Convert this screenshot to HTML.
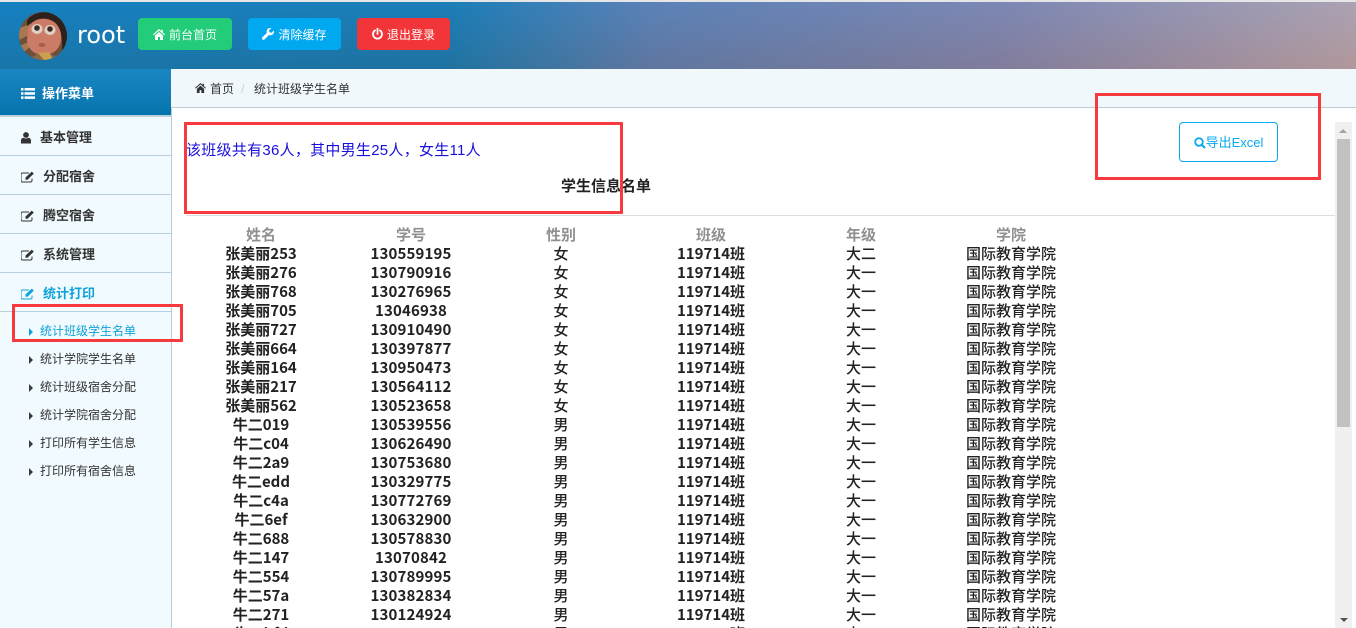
<!DOCTYPE html>
<html lang="zh-CN">
<head>
<meta charset="utf-8">
<title>统计班级学生名单</title>
<style>
html,body{margin:0;padding:0;width:1356px;height:628px;overflow:hidden;background:#fff;}
body{position:relative;font-family:"Liberation Sans","Noto Sans CJK SC",sans-serif;font-size:12px;color:#333;}
.abs,.btn,.item,.sub,.sep,.box,.hd{position:absolute;}
#top{position:absolute;left:0;top:0;width:1356px;height:2px;background:#e6e6e6;}
#header{position:absolute;left:0;top:2px;width:1356px;height:67px;background:linear-gradient(180deg,rgba(40,140,230,.12),rgba(70,30,0,.1)),linear-gradient(90deg,#137fbc 0%,#1a7cb2 33%,#6280b1 48%,#8887ad 74%,#bda5ac 100%);}
.btn{top:18px;height:32px;border-radius:4px;color:#fff;font-size:12px;line-height:34px;text-align:center;white-space:nowrap;}
.btn svg{vertical-align:-1px;margin-right:4px;}
#side{position:absolute;left:0;top:69px;width:171px;height:559px;background:#f1fafe;}
#vline{position:absolute;left:171px;top:108px;width:1px;height:520px;background:#bccdd8;}
#sidehead{position:absolute;left:0;top:69px;width:171px;height:46px;background:linear-gradient(180deg,#1a86c3,#0674ad);border-bottom:2px solid #bcd0dc;color:#fff;font-weight:bold;font-size:13px;line-height:50px;}
.sep{left:0;width:171px;height:1px;background:#b7cfdd;}
.item{left:21px;font-size:13px;font-weight:bold;color:#333;line-height:20px;white-space:nowrap;}
.item svg{vertical-align:-2px;margin-right:7px;}
.sub{left:29px;font-size:12px;color:#333;line-height:16px;white-space:nowrap;}
.sub i{display:inline-block;width:0;height:0;border-left:4px solid #3a3a3a;border-top:4px solid transparent;border-bottom:4px solid transparent;margin-right:7px;vertical-align:-0.5px;}
#crumb{position:absolute;left:171px;top:69px;width:1185px;height:38px;background:#f1f8fc;border-bottom:1px solid #bccdd8;}
.box{border:3px solid #f63a3e;box-sizing:border-box;}
#tbl{position:absolute;left:186px;top:225px;border-collapse:collapse;table-layout:fixed;width:900px;font-family:"Noto Sans CJK SC","Liberation Sans",sans-serif;font-size:15px;font-weight:bold;color:#222;}
#tbl td,#tbl th{width:150px;height:19px;padding:0;text-align:center;line-height:19px;white-space:nowrap;}
#tbl th{color:#909090;font-size:15px;}
#tbl tr{height:19px;}
#tbl td.r{font-weight:500;}
#tbl td.n{letter-spacing:.15px;}
</style>
</head>
<body>
<div id="top"></div>
<div id="header"></div>

<svg class="abs" style="left:19px;top:12px" width="48" height="48" viewBox="0 0 48 48">
  <defs><clipPath id="c"><circle cx="24" cy="24" r="24"/></clipPath></defs>
  <g clip-path="url(#c)">
    <rect width="48" height="48" fill="#6e4f38"/>
    <path d="M0 16L12 12V22L0 28ZM0 34L10 30V36L2 42Z" fill="#a87850"/>
    <path d="M8 9C14-3 40-3 48 10V36L43 38C44 26 42 14 34 9 26 5 16 7 8 14Z" fill="#2e211b"/>
    <path d="M9 18C12 8 20 6 28 7 38 9 43 18 42 28 41 38 33 43 24 43 15 43 8 36 8 28Z" fill="#cc7c66"/>
    <path d="M8 48L20 41 30 41 42 48Z" fill="#8c6a45"/>
    <path d="M19 41L25 48H34L30 40Z" fill="#caa24e"/>
    <ellipse cx="18" cy="17" rx="5.500" ry="5" fill="#ded2c8"/>
    <ellipse cx="31" cy="18" rx="5.500" ry="5" fill="#ded2c8"/>
    <circle cx="18" cy="16" r="2.800" fill="#3c2a22"/>
    <circle cx="31" cy="17" r="2.800" fill="#3c2a22"/>
    <ellipse cx="23" cy="33" rx="3.500" ry="2" fill="#a85a4c"/>
  </g>
</svg>
<div class="abs" style="left:77px;top:20px;font-family:'DejaVu Sans',sans-serif;font-size:24px;line-height:30px;color:#fff;">root</div>

<div class="btn" style="left:138px;width:94px;background:#22cc78;"><svg width="12" height="11" viewBox="0 0 12 11"><path d="M6 0L0 5.400l.7.800L6 1.600l5.300 4.600.7-.8L9.800 3.500V.8H8.300V2.200zM2 6.500V11h3V8h2v3h3V6.500L6 3z" fill="#fff"/></svg>前台首页</div>
<div class="btn" style="left:248px;width:93px;background:#00a8f0;"><svg width="12" height="12" viewBox="0 0 12 12"><path d="M11.800 2.500L9.500 4.800 7.500 4.300 7 2.300 9.400.1C7.800-.3 6 .2 5.200 1.500 4.500 2.600 4.500 3.800 4.900 4.800L.4 9.300c-.6.600-.6 1.500 0 2.100s1.600.6 2.200 0L7 7c1.100.5 2.400.4 3.500-.4 1.300-.9 1.800-2.600 1.300-4.100z" fill="#fff"/></svg>清除缓存</div>
<div class="btn" style="left:357px;width:93px;background:#f23538;"><svg width="11" height="12" viewBox="0 0 11 12"><path d="M5.500 0.500V6" stroke="#fff" stroke-width="1.800" stroke-linecap="round" fill="none"/><path d="M3 2.400A4.500 4.500 0 1 0 8 2.400" stroke="#fff" stroke-width="1.800" stroke-linecap="round" fill="none"/></svg>退出登录</div>

<div id="side"></div>
<div id="vline"></div>
<div id="sidehead"><svg class="abs" style="left:21px;top:19px" width="14" height="11" viewBox="0 0 14 11"><path d="M0 0h2.500v2.500H0zM3.500 0H14v2.500H3.500zM0 4.200h2.500v2.500H0zM3.500 4.200H14v2.500H3.500zM0 8.400h2.500v2.500H0zM3.500 8.400H14v2.500H3.500z" fill="#fff"/></svg><span style="position:absolute;left:42px;top:0;white-space:nowrap">操作菜单</span></div>

<div class="sep" style="top:155px"></div>
<div class="sep" style="top:194px"></div>
<div class="sep" style="top:233px"></div>
<div class="sep" style="top:272px"></div>
<div class="sep" style="top:311px"></div>

<div class="item" style="top:128px"><svg width="10" height="12" viewBox="0 0 10 12" style="margin-right:9px"><circle cx="5" cy="3" r="2.900" fill="#333"/><path d="M0 11.500V8.500C0 6.800 1.300 6 2.500 5.800 3.500 6.700 6.500 6.700 7.500 5.800 8.700 6 10 6.800 10 8.500V11.500z" fill="#333"/></svg>基本管理</div>
<div class="item" style="top:167px"><svg width="14" height="12" viewBox="0 0 14 12" fill="none" style="margin-right:8px"><path d="M11 7.500v2A1.500 1.500 0 0 1 9.500 11h-8A1.500 1.500 0 0 1 0 9.500v-6A1.500 1.500 0 0 1 1.500 2H8" stroke="#333" stroke-width="1"/><path d="M4.500 6.500L10.800 .6l2 2L6.500 8.800H4.500z" fill="#333"/></svg>分配宿舍</div>
<div class="item" style="top:206px"><svg width="14" height="12" viewBox="0 0 14 12" fill="none" style="margin-right:8px"><path d="M11 7.500v2A1.500 1.500 0 0 1 9.500 11h-8A1.500 1.500 0 0 1 0 9.500v-6A1.500 1.500 0 0 1 1.500 2H8" stroke="#333" stroke-width="1"/><path d="M4.500 6.500L10.800 .6l2 2L6.500 8.800H4.500z" fill="#333"/></svg>腾空宿舍</div>
<div class="item" style="top:245px"><svg width="14" height="12" viewBox="0 0 14 12" fill="none" style="margin-right:8px"><path d="M11 7.500v2A1.500 1.500 0 0 1 9.500 11h-8A1.500 1.500 0 0 1 0 9.500v-6A1.500 1.500 0 0 1 1.500 2H8" stroke="#333" stroke-width="1"/><path d="M4.500 6.500L10.800 .6l2 2L6.500 8.800H4.500z" fill="#333"/></svg>系统管理</div>
<div class="item" style="top:284px;color:#0ea3d8"><svg width="14" height="12" viewBox="0 0 14 12" fill="none" style="margin-right:8px"><path d="M11 7.500v2A1.500 1.500 0 0 1 9.500 11h-8A1.500 1.500 0 0 1 0 9.500v-6A1.500 1.500 0 0 1 1.500 2H8" stroke="#0ea3d8" stroke-width="1"/><path d="M4.500 6.500L10.800 .6l2 2L6.500 8.800H4.500z" fill="#0ea3d8"/></svg>统计打印</div>

<div class="sub" style="top:323px;color:#0ea3d8"><i style="border-left-color:#0ea3d8"></i>统计班级学生名单</div>
<div class="sub" style="top:351px"><i></i>统计学院学生名单</div>
<div class="sub" style="top:379px"><i></i>统计班级宿舍分配</div>
<div class="sub" style="top:407px"><i></i>统计学院宿舍分配</div>
<div class="sub" style="top:435px"><i></i>打印所有学生信息</div>
<div class="sub" style="top:463px"><i></i>打印所有宿舍信息</div>

<div id="crumb"></div>
<svg class="abs" style="left:195px;top:83px" width="11" height="10" viewBox="0 0 12 11"><path d="M6 0L0 5.400l.7.800L6 1.600l5.300 4.600.7-.8L9.800 3.500V.8H8.300V2.200zM2 6.500V11h3V8h2v3h3V6.500L6 3z" fill="#333"/></svg>
<div class="abs" style="left:210px;top:81px;font-size:12px;line-height:16px;white-space:nowrap;">首页</div>
<div class="abs" style="left:241px;top:81px;font-size:12px;line-height:16px;color:#ccc;">/</div>
<div class="abs" style="left:254px;top:81px;font-size:12px;line-height:16px;white-space:nowrap;">统计班级学生名单</div>

<div class="abs" style="left:186px;top:141px;font-size:15px;letter-spacing:.27px;line-height:20px;color:#1a10dd;white-space:nowrap;">该班级共有36人，其中男生25人，女生11人</div>
<div class="abs" style="left:561px;top:177px;font-size:15px;line-height:20px;font-weight:bold;color:#222;white-space:nowrap;">学生信息名单</div>
<div class="abs" style="left:186px;top:215px;width:1149px;height:1px;background:#ddd;"></div>

<div class="abs" style="left:1179px;top:122px;width:99px;height:40px;box-sizing:border-box;border:1px solid #0aa9ef;border-radius:4px;color:#0aa9ef;font-size:13px;line-height:40px;text-align:center;white-space:nowrap;background:#fff;"><svg width="12" height="12" viewBox="0 0 12 12" fill="none" style="vertical-align:-2px"><circle cx="5" cy="5" r="3.800" stroke="#0aa9ef" stroke-width="1.800"/><path d="M8 8l3 3" stroke="#0aa9ef" stroke-width="2"/></svg>导出Excel</div>

<table id="tbl"><tbody>
<tr><th>姓名</th><th>学号</th><th>性别</th><th>班级</th><th>年级</th><th>学院</th></tr>
<tr><td>张美丽253</td><td class="n">130559195</td><td class="r">女</td><td>119714班</td><td class="r">大二</td><td class="r">国际教育学院</td></tr>
<tr><td>张美丽276</td><td class="n">130790916</td><td class="r">女</td><td>119714班</td><td class="r">大一</td><td class="r">国际教育学院</td></tr>
<tr><td>张美丽768</td><td class="n">130276965</td><td class="r">女</td><td>119714班</td><td class="r">大一</td><td class="r">国际教育学院</td></tr>
<tr><td>张美丽705</td><td class="n">13046938</td><td class="r">女</td><td>119714班</td><td class="r">大一</td><td class="r">国际教育学院</td></tr>
<tr><td>张美丽727</td><td class="n">130910490</td><td class="r">女</td><td>119714班</td><td class="r">大一</td><td class="r">国际教育学院</td></tr>
<tr><td>张美丽664</td><td class="n">130397877</td><td class="r">女</td><td>119714班</td><td class="r">大一</td><td class="r">国际教育学院</td></tr>
<tr><td>张美丽164</td><td class="n">130950473</td><td class="r">女</td><td>119714班</td><td class="r">大一</td><td class="r">国际教育学院</td></tr>
<tr><td>张美丽217</td><td class="n">130564112</td><td class="r">女</td><td>119714班</td><td class="r">大一</td><td class="r">国际教育学院</td></tr>
<tr><td>张美丽562</td><td class="n">130523658</td><td class="r">女</td><td>119714班</td><td class="r">大一</td><td class="r">国际教育学院</td></tr>
<tr><td>牛二019</td><td class="n">130539556</td><td class="r">男</td><td>119714班</td><td class="r">大一</td><td class="r">国际教育学院</td></tr>
<tr><td>牛二c04</td><td class="n">130626490</td><td class="r">男</td><td>119714班</td><td class="r">大一</td><td class="r">国际教育学院</td></tr>
<tr><td>牛二2a9</td><td class="n">130753680</td><td class="r">男</td><td>119714班</td><td class="r">大一</td><td class="r">国际教育学院</td></tr>
<tr><td>牛二edd</td><td class="n">130329775</td><td class="r">男</td><td>119714班</td><td class="r">大一</td><td class="r">国际教育学院</td></tr>
<tr><td>牛二c4a</td><td class="n">130772769</td><td class="r">男</td><td>119714班</td><td class="r">大一</td><td class="r">国际教育学院</td></tr>
<tr><td>牛二6ef</td><td class="n">130632900</td><td class="r">男</td><td>119714班</td><td class="r">大一</td><td class="r">国际教育学院</td></tr>
<tr><td>牛二688</td><td class="n">130578830</td><td class="r">男</td><td>119714班</td><td class="r">大一</td><td class="r">国际教育学院</td></tr>
<tr><td>牛二147</td><td class="n">13070842</td><td class="r">男</td><td>119714班</td><td class="r">大一</td><td class="r">国际教育学院</td></tr>
<tr><td>牛二554</td><td class="n">130789995</td><td class="r">男</td><td>119714班</td><td class="r">大一</td><td class="r">国际教育学院</td></tr>
<tr><td>牛二57a</td><td class="n">130382834</td><td class="r">男</td><td>119714班</td><td class="r">大一</td><td class="r">国际教育学院</td></tr>
<tr><td>牛二271</td><td class="n">130124924</td><td class="r">男</td><td>119714班</td><td class="r">大一</td><td class="r">国际教育学院</td></tr>
<tr><td>牛二bfd</td><td class="n">130457312</td><td class="r">男</td><td>119714班</td><td class="r">大一</td><td class="r">国际教育学院</td></tr>
</tbody></table>

<div class="abs" style="left:1335px;top:122px;width:17px;height:506px;background:#f0f0f0;"></div>
<div class="abs" style="left:1337px;top:139px;width:13px;height:288px;background:#c1c1c1;"></div>
<div class="abs" style="left:1339px;top:129px;width:0;height:0;border-left:4px solid transparent;border-right:4px solid transparent;border-bottom:4px solid #a3a3a3;"></div>
<div class="abs" style="left:1340px;top:618px;width:0;height:0;border-left:4px solid transparent;border-right:4px solid transparent;border-top:4px solid #505050;"></div>

<div class="box" style="left:184px;top:122px;width:439px;height:92px;"></div>
<div class="box" style="left:1095px;top:93px;width:226px;height:87px;"></div>
<div class="box" style="left:12px;top:304px;width:171px;height:38px;"></div>
</body>
</html>
